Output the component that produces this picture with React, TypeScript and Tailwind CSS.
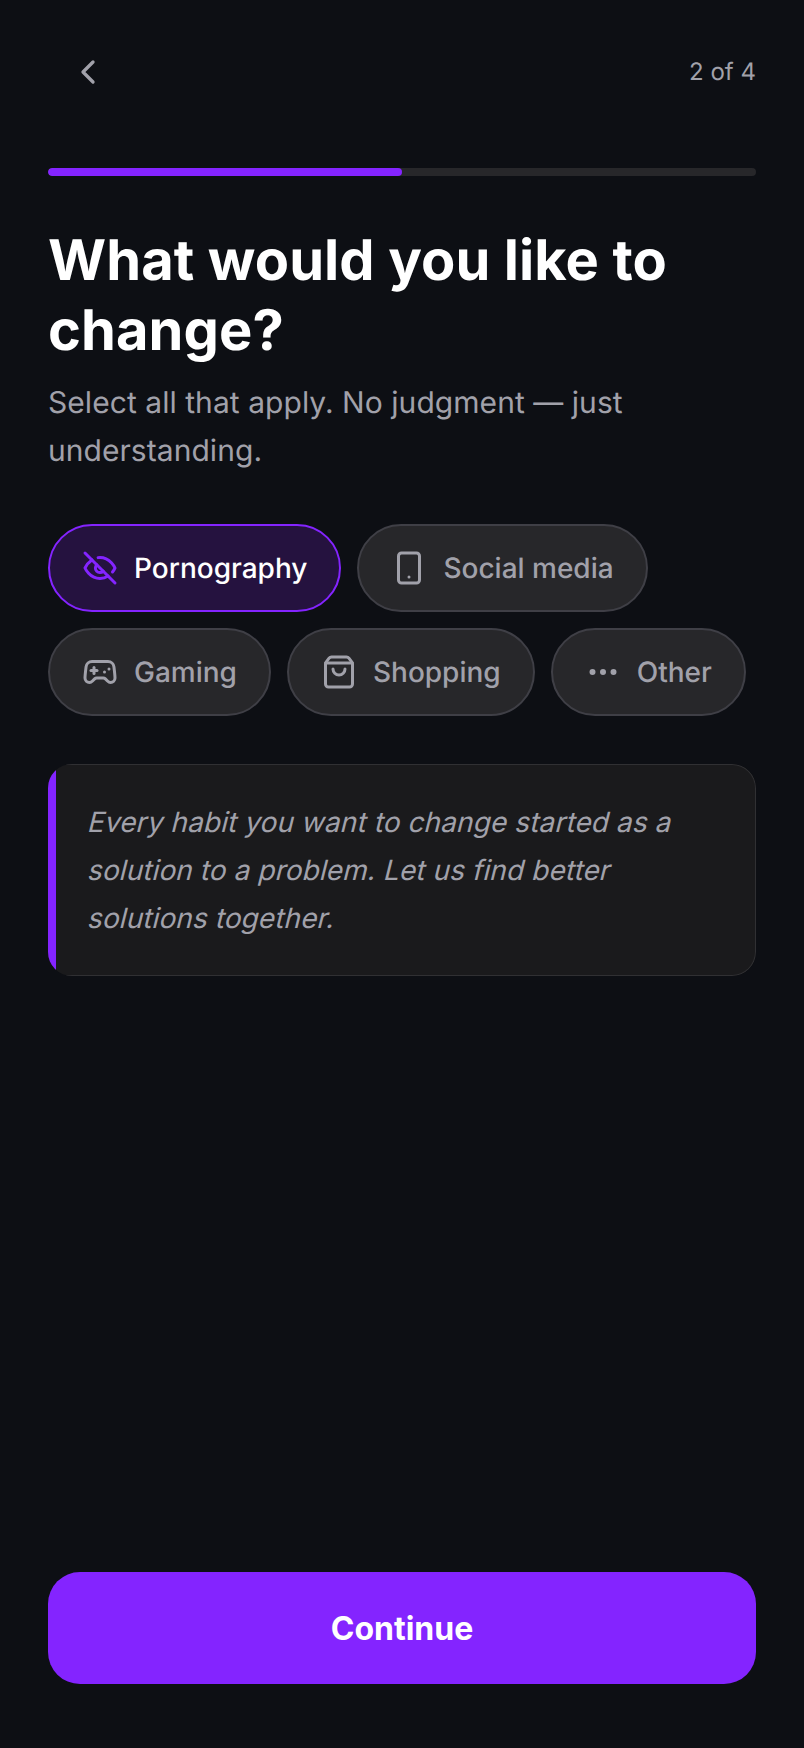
import React from "react";
import { ChevronLeft, Smartphone, Gamepad2, ShoppingBag, Ellipsis } from "lucide-react";

// lucide's older eye-off, the current one has a rounder outline
const EyeSlash = ({ className }: { className?: string }) => (
  <svg
    width={36}
    height={36}
    viewBox="0 0 24 24"
    fill="none"
    stroke="currentColor"
    strokeWidth={2}
    strokeLinecap="round"
    strokeLinejoin="round"
    className={className}
  >
    <path d="M9.88 9.88a3 3 0 1 0 4.24 4.24" />
    <path d="M10.73 5.08A10.43 10.43 0 0 1 12 5c7 0 10 7 10 7a13.16 13.16 0 0 1-1.67 2.68" />
    <path d="M6.61 6.61A13.526 13.526 0 0 0 2 12s3 7 10 7a9.74 9.74 0 0 0 5.39-1.61" />
    <line x1="2" y1="2" x2="22" y2="22" />
  </svg>
);

const chips = [
  { label: "Pornography", icon: EyeSlash, selected: true },
  { label: "Social media", icon: Smartphone, selected: false },
  { label: "Gaming", icon: Gamepad2, selected: false },
  { label: "Shopping", icon: ShoppingBag, selected: false },
  { label: "Other", icon: Ellipsis, selected: false },
];

// the quote is a slanted regular face rather than a true italic
const quoteLines = [
  "Every habit you want to change started as a",
  "solution to a problem. Let us find better",
  "solutions together.",
];

const App: React.FC = () => {
  return (
    <div className="min-h-screen w-full bg-[#0d0f14] px-12 pb-16 flex flex-col font-['Inter',sans-serif] [text-rendering:geometricPrecision]">
      <div className="h-[80px] mt-8 flex items-center justify-between">
        <button className="p-5">
          <ChevronLeft size={40} strokeWidth={2} className="text-[#a1a1aa]" />
        </button>
        <span className="text-[24px] text-[#a1a1aa]">2 of 4</span>
      </div>

      <div className="mt-14 h-2 w-full rounded-full bg-[#27272a] overflow-hidden">
        <div className="h-full w-1/2 rounded-full bg-[#8424ff]" />
      </div>

      <h1 className="mt-[49px] text-[56px] leading-[70px] font-bold tracking-[0.1px] text-white">
        What would you like to change?
      </h1>
      <p className="mt-3.5 text-[30px] leading-[48px] tracking-[0.05px] text-[#a1a1aa]">
        Select all that apply. No judgment — just understanding.
      </p>

      <div className="mt-[49px] flex flex-wrap gap-4">
        {chips.map((chip) => {
          const Icon = chip.icon;
          return (
            <div
              key={chip.label}
              className={
                chip.selected
                  ? "h-[88px] px-8 flex items-center gap-4 rounded-full border-2 border-[#8424ff] bg-[#25123f]"
                  : "h-[88px] px-8 flex items-center gap-4 rounded-full border-2 border-[#3f3f46] bg-[#27272a]"
              }
            >
              <Icon size={36} strokeWidth={2} className={chip.selected ? "text-[#8424ff]" : "text-[#a1a1aa]"} />
              <span className={chip.selected ? "text-[28px] font-medium text-white" : "text-[28px] font-medium text-[#a1a1aa]"}>
                {chip.label}
              </span>
            </div>
          );
        })}
      </div>

      <div className="mt-12 flex overflow-hidden rounded-3xl bg-[#1a1a1c]">
        <div className="w-2 shrink-0 bg-[#8424ff]" />
        <div className="flex-1 rounded-r-3xl border-y border-r border-[#303033] pl-[33px] pr-8 py-[33px]">
          <p className="text-[28px] leading-[48px] tracking-[0.09px] text-[#a1a1aa]">
            {quoteLines.map((line) => (
              <span key={line} className="block origin-left -skew-x-[14deg]">
                {line}
              </span>
            ))}
          </p>
        </div>
      </div>

      <button className="mt-auto h-[112px] w-full rounded-[32px] bg-[#8424ff] pt-0.5 text-[32px] font-bold text-white">
        Continue
      </button>
    </div>
  );
};

export default App;
